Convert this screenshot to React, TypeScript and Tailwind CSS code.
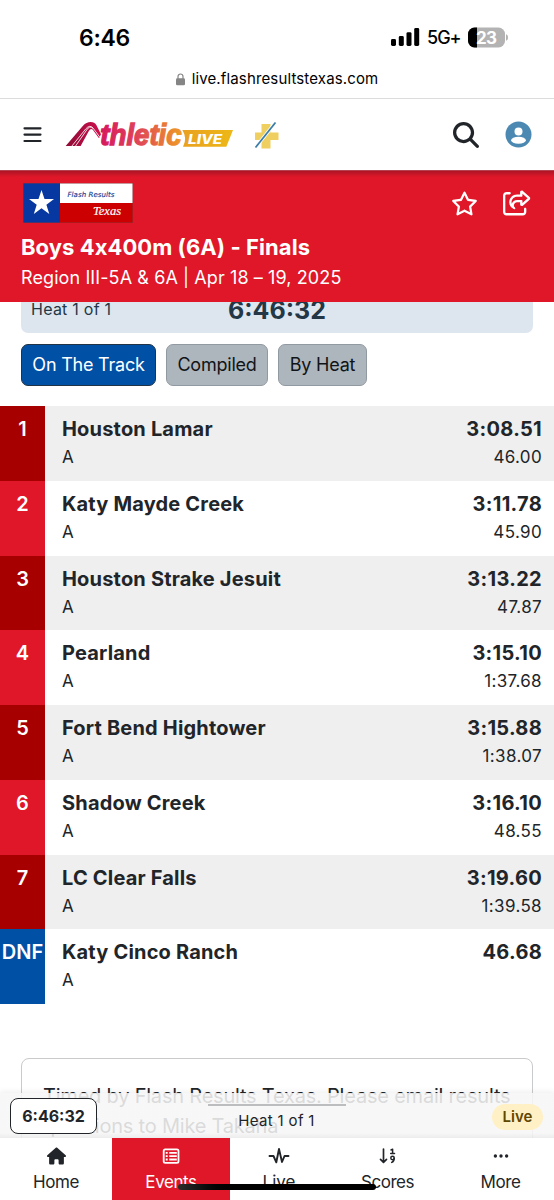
import React from "react";
import { FaHouse, FaMagnifyingGlass, FaRegShareFromSquare, FaRegStar } from "react-icons/fa6";
import { BsThreeDots } from "react-icons/bs";

const results = [
  { place: "1", team: "Houston Lamar", time: "3:08.51", split: "46.00" },
  { place: "2", team: "Katy Mayde Creek", time: "3:11.78", split: "45.90" },
  { place: "3", team: "Houston Strake Jesuit", time: "3:13.22", split: "47.87" },
  { place: "4", team: "Pearland", time: "3:15.10", split: "1:37.68" },
  { place: "5", team: "Fort Bend Hightower", time: "3:15.88", split: "1:38.07" },
  { place: "6", team: "Shadow Creek", time: "3:16.10", split: "48.55" },
  { place: "7", team: "LC Clear Falls", time: "3:19.60", split: "1:39.58" },
  { place: "DNF", team: "Katy Cinco Ranch", time: "46.68", split: "" },
];

function StatusBar() {
  return (
    <div className="flex h-[60px] shrink-0 items-start justify-between pl-[79px] pr-[45px] pt-[23px]">
      <span className="text-[23px] font-semibold leading-[30px] tracking-[-0.3px] text-black">6:46</span>
      <div className="flex items-center pt-[3px]">
        <svg width="29" height="20" viewBox="0 0 29 20" fill="#000">
          <rect x="0" y="12" width="5" height="7" rx="1.4" />
          <rect x="7.8" y="9" width="5" height="10" rx="1.4" />
          <rect x="15.5" y="5.2" width="5" height="13.8" rx="1.4" />
          <rect x="23.2" y="1" width="5" height="18" rx="1.4" />
        </svg>
        <span className="ml-[7px] w-[34px] whitespace-nowrap pt-[2px] text-[18px] font-medium leading-5 tracking-[-1px] text-black">5G+</span>
        <svg className="ml-[7px]" width="41" height="21" viewBox="0 0 41 21">
          <defs>
            <clipPath id="battery"><rect x="0" y="0.5" width="37" height="20" rx="6.5" /></clipPath>
          </defs>
          <g clipPath="url(#battery)">
            <rect width="37" height="21" fill="#b3b3b3" />
            <rect width="9" height="21" fill="#000" />
          </g>
          <path d="M38 7.2c1.3.4 2 1.5 2 3.3s-.7 2.900-2 3.300z" fill="#b3b3b3" />
          <text x="8" y="16.500" fontSize="17" fontWeight="700" fill="#fff" textLength="21">23</text>
        </svg>
      </div>
    </div>
  );
}

function Logo() {
  return (
    <svg className="ml-[22px]" width="170" height="30" viewBox="0 0 510 90">
      <defs>
        <linearGradient id="roof" x1="0" x2="1">
          <stop offset="0" stopColor="#8d0b35" />
          <stop offset="1" stopColor="#d0104f" />
        </linearGradient>
        <linearGradient id="word" x1="0" x2="1">
          <stop offset="0" stopColor="#d6175d" />
          <stop offset="0.45" stopColor="#df4358" />
          <stop offset="1" stopColor="#ee9a25" />
        </linearGradient>
        <linearGradient id="tag" x1="0" x2="1">
          <stop offset="0" stopColor="#e9a020" />
          <stop offset="1" stopColor="#edb817" />
        </linearGradient>
      </defs>
      <path d="M5 78 57 17Q67 6 80 6q12 0 17 9l14 28-6 12-18-25q-6-7-12 2L50 78z" fill="url(#roof)" />
      <path d="M23 79 65 27q12-14 22-3l20 27M34 79 68 30q9-15 19-5" fill="none" stroke="#fff" strokeWidth="2.500" />
      <text x="109" y="76" fontFamily="Liberation Sans" fontSize="88" fontWeight="700" fontStyle="italic" fill="url(#word)" stroke="url(#word)" strokeWidth="4" textLength="244" lengthAdjust="spacingAndGlyphs">thletic</text>
      <path d="M355 30h152l-20 50H357q14-25-2-50z" fill="url(#tag)" />
      <text x="372" y="71" fontSize="39" fontWeight="800" fontStyle="italic" fill="#fff" textLength="103" lengthAdjust="spacingAndGlyphs">LIVE</text>
    </svg>
  );
}

function SiteHeader() {
  return (
    <header className="flex h-[71px] shrink-0 items-center bg-white pl-[23px] pr-[22px]">
      <svg width="19" height="18" viewBox="0 0 19 18" stroke="#212529" strokeWidth="2.200" strokeLinecap="round">
        <path d="M1.500 2.300h16M1.500 8.600h16M1.500 15h16" />
      </svg>
      <Logo />
      <svg className="ml-[20px]" width="26" height="28" viewBox="0 0 26 28">
        <path d="M7.500 3h9v8.500h8v7.500h-8v8.500h-9V19H1v-7.500h6.500z" fill="#f0cf61" />
        <path d="M1.500 26.500 21.500 1.500" stroke="#fff" strokeWidth="3.400" />
        <path d="M1.500 26.500 21.500 1.500" stroke="#397da8" strokeWidth="1.800" />
      </svg>
      <FaMagnifyingGlass className="ml-auto mr-[26px] size-[26px] text-[#212529]" />
      <svg width="27" height="27" viewBox="0 0 27 27">
        <circle cx="13.500" cy="13.500" r="13" fill="#4b89b2" />
        <circle cx="13.500" cy="10.500" r="4" fill="#fff" />
        <ellipse cx="13.500" cy="19.300" rx="7.400" ry="3.500" fill="#fff" />
      </svg>
    </header>
  );
}

function EventHeader() {
  return (
    <section className="h-[132px] shrink-0 bg-[linear-gradient(to_bottom,#b97078_0,#ad1424_1px,#e01729_7px)] px-[21px] pt-[13px] text-white">
      <div className="flex h-[40px] items-start justify-between">
        <svg className="ml-[2px]" width="110" height="40" viewBox="0 0 110 40">
          <rect width="110" height="40" fill="#c00" />
          <rect width="110" height="20" fill="#fff" />
          <rect width="37" height="40" fill="#0737a0" />
          <path d="m18.500 7 3 9h9.500l-7.600 5.800 2.900 9.200-7.800-5.700-7.700 5.700 2.900-9.200L6 16h9.500z" fill="#fff" />
          <text x="44.500" y="13.500" fontFamily="DejaVu Sans" fontSize="7" fontStyle="italic" fill="#173b91" stroke="#173b91" strokeWidth="0.150" textLength="47">Flash Results</text>
          <text x="70" y="32" fontFamily="Liberation Serif" fontSize="13" fontStyle="italic" fill="#fff" stroke="#fff" strokeWidth=".2" textLength="28" lengthAdjust="spacingAndGlyphs">Texas</text>
          <rect x=".25" y=".25" width="109.500" height="39.500" fill="none" stroke="#8d3038" strokeWidth=".5" />
        </svg>
        <div className="flex items-center pr-[2px] pt-[6px]">
          <FaRegStar className="mr-[25px] size-[27px]" />
          <FaRegShareFromSquare className="size-[28px]" />
        </div>
      </div>
      <h1 className="mt-[10px] whitespace-nowrap text-[22px] font-bold leading-7 tracking-[0.06px]">Boys 4x400m (6A) - Finals</h1>
      <p className="mt-[4px] whitespace-nowrap text-[18px] leading-[26px] tracking-[0.1px]">Region III-5A &amp; 6A | Apr 18 – 19, 2025</p>
    </section>
  );
}

function Nav() {
  return (
    <nav className="grid h-[62px] grid-cols-[112px_118px_98px_119px_107px] bg-white text-[17px] leading-5 text-[#212529]">
      <div className="flex flex-col items-center pt-[8px]">
        <FaHouse className="h-5 w-[19px]" />
        <span className="mt-[6px] tracking-[-0.4px]">Home</span>
      </div>
      <div className="flex flex-col items-center bg-[#e01729] pt-[8px] text-white">
        <svg width="20" height="20" viewBox="0 0 20 20" fill="none" stroke="currentColor" strokeWidth="1.800">
          <rect x="2.700" y="3.300" width="14.800" height="13.600" rx="1.600" />
          <path d="M4.700 6.900h2M8.200 6.900h7.600M4.700 10.200h2M8.200 10.200h7.600M4.700 13.500h2M8.200 13.500h7.600" />
        </svg>
        <span className="mt-[6px] tracking-[-0.4px]">Events</span>
      </div>
      <div className="flex flex-col items-center pt-[9px]">
        <svg width="22" height="20" viewBox="0 0 22 20" fill="none" stroke="currentColor" strokeWidth="1.900" strokeLinecap="round" strokeLinejoin="round">
          <path d="M1.500 9h4l2.800 6.300L11 2l3 13 2.500-6h4" />
        </svg>
        <span className="mt-[5px]">Live</span>
      </div>
      <div className="flex flex-col items-center pt-[9px]">
        <svg width="20" height="20" viewBox="0 0 20 20" fill="none" stroke="currentColor" strokeWidth="1.700" strokeLinecap="round" strokeLinejoin="round">
          <path d="M5.500 2v13M2.500 12.300l3 3 3-3" />
          <path d="M13 3l1.600-.8v4.300M12.700 6.600h3.800" strokeWidth="1.500" />
          <circle cx="14.500" cy="11" r="1.700" strokeWidth="1.500" />
          <path d="M16.200 11.200c0 2-.8 3.500-2.500 4.200" strokeWidth="1.500" />
        </svg>
        <span className="mt-[5px] tracking-[-0.5px]">Scores</span>
      </div>
      <div className="flex flex-col items-center pt-[9px]">
        <BsThreeDots className="size-[18px]" />
        <span className="mt-[7px] tracking-[-0.4px]">More</span>
      </div>
    </nav>
  );
}

export default function App() {
  return (
    <main className="relative flex h-[1200px] w-[554px] flex-col overflow-hidden bg-white font-['Inter',sans-serif] text-[#212529]">
      <StatusBar />
      <div className="flex h-[39px] shrink-0 items-center justify-center border-b border-[#dcdcdd]">
        <svg className="mr-[7px]" width="9" height="13" viewBox="0 0 9 13">
          <path d="M2 6V3.500a2.500 2.500 0 0 1 5 0V6" fill="none" stroke="#858585" strokeWidth="1.200" />
          <rect x="0" y="5.300" width="9" height="7" rx="1.300" fill="#858585" />
        </svg>
        <span className="text-[15px] tracking-[0.14px] text-black">live.flashresultstexas.com</span>
      </div>
      <SiteHeader />
      <EventHeader />
      <div className="mx-[21px] grid h-[31px] shrink-0 grid-cols-3 overflow-hidden rounded-b-[7px] bg-[#dde6ef] px-[10px] text-[#243746]">
        <span className="-mt-[5px] text-[16px] leading-6 tracking-[0.25px]">Heat 1 of 1</span>
        <span className="-mt-[8px] text-center text-[25px] font-bold leading-8">6:46:32</span>
      </div>
      <div className="mt-[11px] flex h-[42px] shrink-0 gap-[10px] pl-[21px] text-[18px] tracking-[-0.22px]">
        <button className="w-[135px] rounded-[7px] border border-[#213345] bg-[#0050a5] pb-[2px] text-white">On The Track</button>
        <button className="w-[102px] rounded-[7px] border border-[#929aa1] bg-[#adb5bd] pb-[2px] text-[#111417]">Compiled</button>
        <button className="w-[89px] rounded-[7px] border border-[#929aa1] bg-[#adb5bd] pb-[2px] text-[#111417]">By Heat</button>
      </div>
      <div className="mt-[20px] grid h-[598px] shrink-0 grid-rows-8">
        {results.map((row, i) => (
          <div key={row.place} className={i % 2 === 0 ? "flex bg-[#efefef]" : "flex bg-white"}>
            <div className={`flex w-[45px] shrink-0 justify-center pt-[9px] text-[20px] font-semibold leading-7 text-white ${row.place === "DNF" ? "bg-[#0050a5]" : i % 2 === 0 ? "bg-[#a60000]" : "bg-[#e01729]"}`}>{row.place}</div>
            <div className="flex flex-1 justify-between pl-[17px] pr-[12px] pt-[9px]">
              <div>
                <div className="whitespace-nowrap text-[20px] font-bold leading-7 tracking-[0.18px]">{row.team}</div>
                <div className="text-[17px] leading-7">A</div>
              </div>
              <div className="text-right">
                <div className="text-[20px] font-bold leading-7 tracking-[0.3px]">{row.time}</div>
                <div className="text-[17px] leading-7 tracking-[0.35px]">{row.split}</div>
              </div>
            </div>
          </div>
        ))}
      </div>
      <div className="mx-[21px] mt-[54px] h-[150px] shrink-0 rounded-[8px] border border-[#c9cacc] pl-[21px] pt-[22px] text-[20px] leading-[30px] tracking-[-0.21px]">
        <p className="whitespace-nowrap">Timed by Flash Results Texas. Please email results</p>
        <p className="whitespace-nowrap">questions to Mike Takaha</p>
      </div>
      <footer className="absolute inset-x-0 bottom-0">
        <div className="flex h-[45px] items-start justify-between bg-[linear-gradient(to_bottom,#f6f6f6dd_40px,#e9e9e9dd_45px)] pl-[10px] pr-[11px] shadow-[0_-2px_5px_rgba(0,0,0,0.06)]">
          <div className="mt-[5px] flex h-[36px] w-[87px] items-center justify-center rounded-[8px] border border-[#212529] bg-white text-[16px] font-bold">6:46:32</div>
          <div className="mr-[36px] mt-[11px] w-[138px] border-t-2 border-[#bcbdbe] pt-[4px] text-center text-[15px] leading-[22px] tracking-[0.35px]">Heat 1 of 1</div>
          <div className="mt-[11px] flex h-[26px] w-[51px] items-center justify-center rounded-full bg-[#fff0c5] text-[15px] font-semibold text-[#604700]">Live</div>
        </div>
        <Nav />
        <div className="absolute bottom-[10px] left-[178px] h-[6px] w-[198px] rounded-full bg-gradient-to-r from-[#2d2d2d] via-black via-30% to-black" />
      </footer>
    </main>
  );
}
